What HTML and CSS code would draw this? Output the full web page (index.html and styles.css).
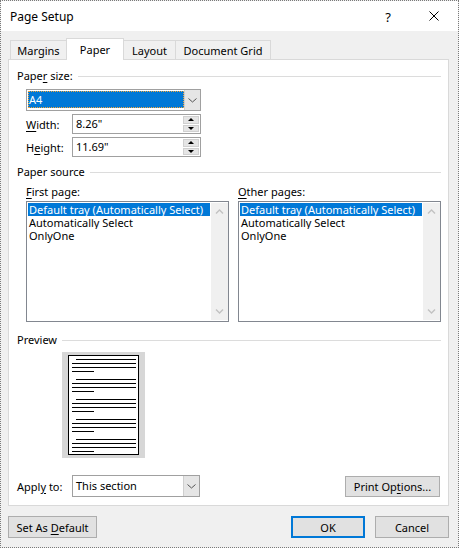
FILE: index.html
```html
<!DOCTYPE html>
<html lang="en">
<head>
<meta charset="utf-8">
<title>Page Setup</title>
<link rel="stylesheet" href="styles.css">
</head>
<body>
<div class="window">
  <div class="titlebar">
    <span class="title">Page Setup</span>
    <span class="tbtn help">?</span>
    <span class="tbtn close"><svg width="10" height="10" viewBox="0 0 10 10"><path d="M0.5 0.5 L9.5 9.5 M9.5 0.5 L0.5 9.5" stroke="#000" stroke-width="1"/></svg></span>
  </div>
  <div class="client">
    <div class="tabs">
      <div class="tab t-margins">Margins</div>
      <div class="tab t-paper active">Paper</div>
      <div class="tab t-layout">Layout</div>
      <div class="tab t-grid">Document Grid</div>
    </div>
    <div class="panel">
      <div class="ghead"><span>Pape<u>r</u> size:</span><span class="rule"></span></div>
      <div class="combo size-combo">
        <div class="combo-value"><span class="sel">A4</span></div>
        <div class="dd"><svg width="15" height="18" viewBox="0 0 15 18"><polyline points="3.5,7.5 7.5,11 11.5,7.5" fill="none" stroke="#555" stroke-width="1"/></svg></div>
      </div>
      <div class="field-row first">
        <label class="flabel"><u>W</u>idth:</label>
        <div class="spinbox"><span class="sb-value">8.26"</span><div class="spin"><span class="up"><i></i></span><span class="down"><i></i></span></div></div>
      </div>
      <div class="field-row">
        <label class="flabel">H<u>e</u>ight:</label>
        <div class="spinbox"><span class="sb-value">11.69"</span><div class="spin"><span class="up"><i></i></span><span class="down"><i></i></span></div></div>
      </div>

      <div class="ghead gap-source"><span>Paper source</span><span class="rule"></span></div>
      <div class="sources">
        <div class="src">
          <div class="src-label"><u>F</u>irst page:</div>
          <div class="list">
            <div class="items">
              <div class="item sel">Default tray (Automatically Select)</div>
              <div class="item">Automatically Select</div>
              <div class="item">OnlyOne</div>
            </div>
            <div class="vscroll">
              <span class="arr"><svg width="17" height="17" viewBox="0 0 17 17"><polyline points="5,10.5 8.5,7 12,10.5" fill="none" stroke="#c2c2c2" stroke-width="1.4"/></svg></span>
              <span class="arr"><svg width="17" height="17" viewBox="0 0 17 17"><polyline points="5,6.5 8.5,10 12,6.5" fill="none" stroke="#c2c2c2" stroke-width="1.4"/></svg></span>
            </div>
          </div>
        </div>
        <div class="src">
          <div class="src-label"><u>O</u>ther pages:</div>
          <div class="list">
            <div class="items">
              <div class="item sel">Default tray (Automatically Select)</div>
              <div class="item">Automatically Select</div>
              <div class="item">OnlyOne</div>
            </div>
            <div class="vscroll">
              <span class="arr"><svg width="17" height="17" viewBox="0 0 17 17"><polyline points="5,10.5 8.5,7 12,10.5" fill="none" stroke="#c2c2c2" stroke-width="1.4"/></svg></span>
              <span class="arr"><svg width="17" height="17" viewBox="0 0 17 17"><polyline points="5,6.5 8.5,10 12,6.5" fill="none" stroke="#c2c2c2" stroke-width="1.4"/></svg></span>
            </div>
          </div>
        </div>
      </div>

      <div class="ghead gap-preview"><span>Preview</span><span class="rule"></span></div>
      <div class="preview">
        <div class="page">
          <div class="para"><span class="ln ind"></span><span class="ln"></span><span class="ln"></span><span class="ln short"></span></div>
          <div class="para"><span class="ln ind"></span><span class="ln"></span><span class="ln"></span><span class="ln short"></span></div>
          <div class="para"><span class="ln ind"></span><span class="ln"></span><span class="ln"></span><span class="ln short"></span></div>
          <div class="para"><span class="ln ind"></span><span class="ln"></span><span class="ln"></span><span class="ln short"></span></div>
          <div class="para"><span class="ln ind"></span><span class="ln"></span><span class="ln"></span><span class="ln short"></span></div>
        </div>
      </div>

      <div class="apply-row">
        <label class="alabel">Appl<u>y</u> to:</label>
        <div class="combo apply-combo">
          <div class="combo-text">This section</div>
          <div class="dd"><svg width="15" height="18" viewBox="0 0 15 18"><polyline points="3.5,7.5 7.5,11 11.5,7.5" fill="none" stroke="#555" stroke-width="1"/></svg></div>
        </div>
        <button class="btn print-btn"><span>Print Op<u>t</u>ions...</span></button>
      </div>
    </div>
    <div class="footer">
      <button class="btn btn-default"><span>Set As <u>D</u>efault</span></button>
      <button class="btn btn-ok"><span>OK</span></button>
      <button class="btn btn-cancel"><span>Cancel</span></button>
    </div>
  </div>
</div>
</body>
</html>
```
FILE: styles.css
```css
* { box-sizing: border-box; }
html, body { margin: 0; padding: 0; }
body {
  font-family: "Noto Sans", "Open Sans", sans-serif;
  font-size: 11px;
  color: #000;
  background: #fff;
}
u { text-decoration: underline; text-underline-offset: 2px; }

.window {
  width: 459px;
  height: 548px;
  border: 1px dotted #7a7a7a;
  display: flex;
  flex-direction: column;
  background: #f0f0f0;
}

.titlebar {
  height: 30px;
  flex: none;
  display: flex;
  align-items: center;
  background: #fff;
  padding: 0 1px 0 9px;
}
.title { flex: 1; font-size: 12px; padding-top: 1px; }
.tbtn {
  width: 46px;
  height: 30px;
  display: flex;
  align-items: center;
  justify-content: center;
}
.help { font-size: 13px; padding-top: 1px; }

.client {
  flex: 1;
  padding: 7px 9px 0 7px;
  display: flex;
  flex-direction: column;
}

.tabs {
  display: flex;
  align-items: flex-end;
  height: 21px;
  padding-left: 2px;
}
.tab {
  height: 19px;
  border: 1px solid #d9d9d9;
  border-bottom: none;
  line-height: 19px;
  text-align: center;
  margin-right: -1px;
  background: #f0f0f0;
}
.tab.active {
  height: 22px;
  background: #fff;
  margin-bottom: -1px;
  position: relative;
  z-index: 1;
  line-height: 22px;
}
.t-margins { width: 57px; }
.t-paper { width: 58px; }
.t-layout { width: 53px; }
.t-grid { width: 96px; }

.panel {
  height: 447px;
  background: #fff;
  border: 1px solid #d9d9d9;
  padding: 8px 7px 0 8px;
  display: flex;
  flex-direction: column;
}

.ghead {
  display: flex;
  align-items: center;
  height: 16px;
  line-height: 16px;
  white-space: nowrap;
}
.ghead .rule {
  flex: 1;
  height: 1px;
  background: #dcdcdc;
  margin-left: 5px;
}
.gap-source { margin-top: 7px; }
.gap-preview { margin-top: 10px; }

.combo {
  display: flex;
  height: 22px;
  border: 1px solid #a0a0a0;
  background: #fff;
}
.size-combo { width: 175px; margin: 5px 0 0 9px; }
.combo-value {
  flex: 1;
  display: flex;
  padding: 1px 0 2px 1px;
}
.combo-value .sel {
  flex: 1;
  background: #0078d7;
  color: #fff;
  outline: 1px dotted #f2a63c;
  outline-offset: -1px;
  padding-left: 1px;
  line-height: 17px;
}
.dd {
  width: 16px;
  background: #e5e5e5;
  border-left: 1px solid #cfcfcf;
  display: flex;
  align-items: center;
  justify-content: center;
}

.field-row {
  display: flex;
  align-items: center;
  margin: 3px 0 0 9px;
  height: 20px;
}
.flabel { width: 46px; }
.spinbox {
  width: 129px;
  height: 20px;
  border: 1px solid #a0a0a0;
  display: flex;
  background: #fff;
}
.sb-value { flex: 1; padding-left: 3px; line-height: 18px; }
.spin {
  width: 17px;
  display: flex;
  flex-direction: column;
  padding: 1px 1px 1px 0;
  gap: 1px;
}
.spin span {
  flex: 1;
  background: #e5e5e5;
  border: 1px solid #d0d0d0;
  display: flex;
  align-items: center;
  justify-content: center;
}
.spin i {
  width: 0;
  height: 0;
  border-left: 3px solid transparent;
  border-right: 3px solid transparent;
}
.spin .up i { border-bottom: 3px solid #000; }
.spin .down i { border-top: 3px solid #000; }

.sources {
  display: grid;
  grid-template-columns: 203px 203px;
  column-gap: 9px;
  margin: 4px 0 0 9px;
}
.src-label { height: 16px; line-height: 16px; }
.list {
  margin-top: 1px;
  height: 121px;
  border: 1px solid #828790;
  padding: 1px 0 1px 1px;
  display: flex;
  background: #fff;
}
.items { flex: 1; }
.item {
  height: 13.4px;
  line-height: 13.4px;
  padding-left: 1px;
  white-space: nowrap;
  overflow: hidden;
}
.item.sel { height: 13px; line-height: 13px; background: #0078d7; color: #fff; margin-right: 1px; }
.vscroll {
  width: 17px;
  background: #f0f0f0;
  display: flex;
  flex-direction: column;
  justify-content: space-between;
}
.arr { display: block; width: 17px; height: 17px; }
.arr svg { display: block; }

.preview {
  margin: 4px 0 0 45px;
  width: 83px;
  height: 106px;
  background: #d7d7d7;
  padding: 3px 6px;
}
.page {
  width: 71px;
  height: 100px;
  border: 1px solid #000;
  background: #fff;
  padding: 3px 0 0 3px;
}
.para {
  display: flex;
  flex-direction: column;
  gap: 3px;
  margin-bottom: 7px;
}
.ln { display: block; height: 1px; background: #000; width: 64px; }
.ln.ind { margin-left: 4px; width: 60px; }
.ln.short { width: 22px; }

.apply-row {
  display: flex;
  align-items: center;
  margin-top: 17px;
  height: 22px;
}
.alabel { width: 55px; }
.apply-combo { width: 128px; }
.combo-text { flex: 1; padding-left: 3px; line-height: 20px; }

.btn {
  height: 21px;
  background: #e1e1e1;
  border: 1px solid #adadad;
  display: flex;
  align-items: center;
  justify-content: center;
  font: inherit;
  color: #000;
  padding: 0;
  white-space: nowrap;
}
.print-btn { margin-left: auto; width: 95px; margin-right: 1px; }

.footer {
  display: flex;
  margin-top: 10px;
}
.footer .btn { height: 22px; }
.btn-default { width: 89px; }
.btn-ok { width: 74px; margin-left: auto; border: 2px solid #0078d7; }
.btn-cancel { width: 74px; margin-left: 10px; }
```
